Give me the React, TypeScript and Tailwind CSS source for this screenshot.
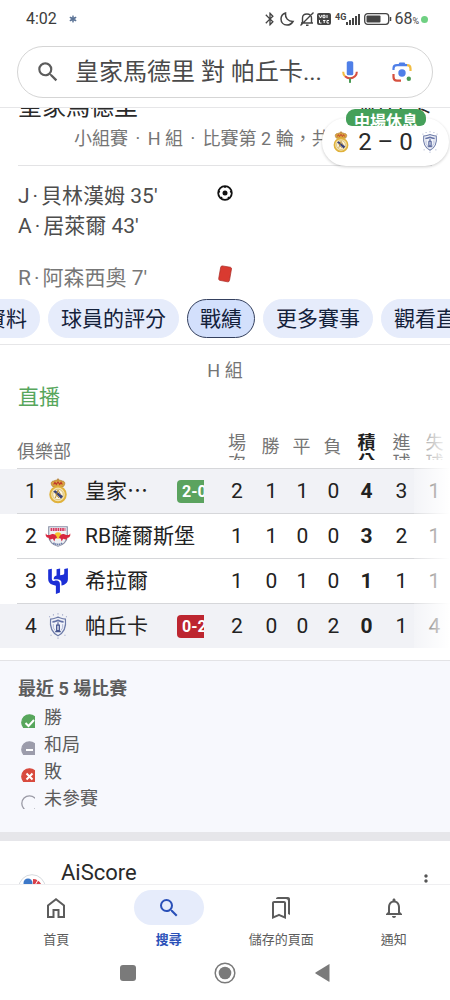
import React, { useState } from "react";
import {
  MdBluetooth,
  MdMoreVert,
  MdNotificationsNone,
  MdOutlineBookmarks,
  MdSearch,
} from "react-icons/md";

const RealMadridCrest = ({ className }: { className: string }) => (
  <svg viewBox="0 0 24 30" className={className} aria-hidden="true">
    <path
      d="M6 10C3 7 4 3.500 7 3.500C9 2.500 10 2.500 12 2C14 2.500 15 2.500 17 3.500C20 3.500 21 7 18 10Z"
      fill="#d9a441"
      stroke="#b27b2c"
      strokeWidth="0.8"
    />
    <path d="M7 7.500L8.500 5L10 7.500L12 4.500L14 7.500L15.500 5L17 7.500" fill="none" stroke="#c0392b" strokeWidth="1.200" />
    <path d="M12 .5V3M11 1.500H13" stroke="#b27b2c" strokeWidth="0.8" />
    <circle cx="12" cy="19" r="9" fill="#f3e3b0" stroke="#e0b23c" strokeWidth="2.200" />
    <circle cx="12" cy="19" r="6" fill="#fbf5e0" stroke="#c9a24a" strokeWidth="0.7" />
    <path d="M6.500 15.500L9 14L17.800 21L15.500 24Z" fill="#39427a" />
    <path d="M9 23L12 14L15 19M9 18L13 23" fill="none" stroke="#b58a2e" strokeWidth="1.100" />
  </svg>
);

const SalzburgCrest = ({ className }: { className: string }) => (
  <svg viewBox="0 0 28 24" className={className} aria-hidden="true">
    <path d="M4 2H24V12C24 18 19 22 14 23C9 22 4 18 4 12Z" fill="#eef0f4" stroke="#8a90a6" strokeWidth="1.200" />
    <path d="M6 5H22" stroke="#d8385e" strokeWidth="3" strokeDasharray="1.800 .7" />
    <circle cx="14" cy="11.500" r="3.500" fill="#f4c430" />
    <path d="M1 9C2 12 4 11 7 10C10 9 12 11 13 14L11 15L10 18L8.500 15L5 16L4 14C2 14 0 12 1 9Z" fill="#d8263f" />
    <path d="M27 9C26 12 24 11 21 10C18 9 16 11 15 14L17 15L18 18L19.500 15L23 16L24 14C26 14 28 12 27 9Z" fill="#d8263f" />
    <path d="M9 19.500C12 21.500 16 21.500 19 19.500" fill="none" stroke="#6d7da8" strokeWidth="1.800" strokeDasharray="1.500 .6" />
  </svg>
);

const HilalCrest = ({ className }: { className: string }) => (
  <svg viewBox="0 0 22 27" className={className} aria-hidden="true">
    <path
      d="M.8 1.500L4.600 .8V11C4.600 13 5.500 13.800 7 13.400C8.500 13 9.500 12.800 10.800 13.300C12.300 13.900 13 15 13 17V25.500L8.800 27V18.500L5.500 17.500C2.300 16.500 .8 14.500 .8 11.500Z"
      fill="#1c2fd6"
    />
    <path
      d="M9.500 1.200L13.200 .4V7.500C15.500 7.500 17.500 7.200 17.500 5.500V1L21.300 .3V11.500C21.300 15.300 18.800 17.500 14.600 18.300V15.500C14.600 12.500 12.500 11.300 6.500 11.800C6.500 9.500 7.500 8.400 9.500 7.900Z"
      fill="#1c2fd6"
    />
  </svg>
);

const PachucaCrest = ({ className }: { className: string }) => (
  <svg viewBox="0 0 22 28" className={className} aria-hidden="true">
    <path d="M3 6.500C6 6.500 8 5.500 11 4.500C14 5.500 16 6.500 19 6.500C20 15 18 21 11 24.500C4 21 2 15 3 6.500Z" fill="#f1f3fa" stroke="#6d7ba8" strokeWidth="1.300" />
    <path d="M5 9.500C8 9.500 9 8.500 11 8C13 8.500 14 9.500 17 9.500" fill="none" stroke="#6472a6" strokeWidth="2" />
    <path d="M11 10V13M9.500 13H12.500V19H9.500ZM8 20H14" fill="#c9cfe3" stroke="#46558f" strokeWidth="1.200" />
    <path d="M6 12V16L8 19M16 12V16L14 19" fill="none" stroke="#9aa5c8" strokeWidth=".8" />
    <path d="M1.500 4H2.500M5.500 2H6.500M10.500 1H11.500M15.500 2H16.500M19.500 4H20.500M3 24H4M18 24H19M10.500 27H11.500" stroke="#8d98bf" strokeWidth="1.200" />
  </svg>
);

const MicIcon = () => (
  <svg viewBox="0 0 24 24" className="h-[26px] w-[26px]" aria-hidden="true">
    <rect x="9" y="2" width="6" height="13" rx="1.500" fill="#4f7fe8" />
    <path d="M5.700 11.800C5.700 13.500 6.300 15 7.400 16" fill="none" stroke="#f2bd42" strokeWidth="1.900" />
    <path d="M7.400 16C10 18.500 14 18.500 16.600 16C17.700 15 18.300 13.500 18.300 11.800" fill="none" stroke="#d6503f" strokeWidth="1.900" />
    <path d="M12 18V22" stroke="#4a9a55" strokeWidth="1.900" />
  </svg>
);

const LensIcon = () => (
  <svg viewBox="0 0 24 24" className="h-6 w-6" aria-hidden="true">
    <path d="M3.500 10V8.500C3.500 6.300 4.800 5.200 7 5.200H17" fill="none" stroke="#4f7fe8" strokeWidth="2.200" />
    <path d="M8 5L9.500 2.500H14.500L16 5Z" fill="#4f7fe8" />
    <path d="M17 5.200C19.200 5.200 20.500 6.300 20.500 8.500V11" fill="none" stroke="#f2bd42" strokeWidth="2.200" />
    <path d="M3.500 14V17C3.500 19.400 4.800 20.600 7 20.600H11" fill="none" stroke="#d6503f" strokeWidth="2.200" />
    <circle cx="12" cy="13" r="3.700" fill="#4f7fe8" />
    <circle cx="18.800" cy="18.800" r="2.200" fill="#4a9a55" />
  </svg>
);

const HomeIcon = ({ className }: { className: string }) => (
  <svg viewBox="0 0 24 24" className={className} fill="none" stroke="currentColor" strokeWidth="2" aria-hidden="true">
    <path d="M4 21V9.500L12 3.300L20 9.500V21H14.500V14H9.500V21Z" />
  </svg>
);

const StatusIcons = () => (
  <div className="flex items-center text-[#444]">
    <MdBluetooth className="h-4 w-4" />
    <svg viewBox="0 0 16 16" className="ml-px h-4 w-4" fill="none" stroke="currentColor" strokeWidth="1.500">
      <path d="M6.500 2C6 7 9 10.500 14 10.500C12.500 13 10.500 14 8 14C4.500 14 2 11.500 2 8C2 5 4 2.800 6.500 2Z" />
    </svg>
    <svg viewBox="0 0 16 16" className="ml-1 h-4 w-4" fill="none" stroke="currentColor" strokeWidth="1.400">
      <path d="M2 12H14M3.500 12V7C3.500 4.500 5.500 3 8 3C10.500 3 12.500 4.500 12.500 7V12M7 14.300H9.500M14.500 1.500L1.500 14.500" />
    </svg>
    <svg viewBox="0 0 14 12" className="ml-0.5 h-3 w-3.5">
      <rect width="14" height="12" rx="2" fill="#444" />
      <path d="M2 2L3.500 5L5 2M6 2.300H8V4.700H6ZM10 2V5M2.500 7V10H4.500M6 7.500H8.500M7.200 7.500V10M12 7.500H10V10H12" fill="none" stroke="#fff" strokeWidth="1" />
    </svg>
    <div className="ml-1 flex items-end">
      <span className="self-start text-[9px] leading-[9px] font-bold">4G</span>
      <svg viewBox="0 0 14 12" className="h-3 w-3.5" fill="currentColor">
        <path d="M0 9H2V12H0ZM3 7H5V12H3ZM6 5H8V12H6ZM9 3H11V12H9ZM12 1H14V12H12Z" />
      </svg>
    </div>
    <svg viewBox="0 0 28 12" className="ml-1 h-3 w-7">
      <rect x=".7" y=".7" width="24" height="10.600" rx="3" fill="none" stroke="#444" strokeWidth="1.300" />
      <rect x="2.500" y="2.500" width="14" height="7" rx="1" fill="#444" />
      <path d="M26.500 4V8" stroke="#444" strokeWidth="1.500" />
    </svg>
    <span className="ml-0.5 text-[16px] leading-5">68</span>
    <span className="mt-1 text-[9px] leading-3">%</span>
    <span className="ml-0.5 h-[7px] w-[7px] rounded-full bg-[#6fd082]" />
  </div>
);

const Header = () => {
  const [query, setQuery] = useState("皇家馬德里 對 帕丘卡...");

  return (
    <header className="shrink-0 border-b border-[#e6e6e8] pb-[9px]">
      <div className="flex h-[38px] items-center justify-between pr-[22px] pl-[26px]">
        <div className="flex items-center gap-3 text-[#3c3c3c]">
          <span className="text-[16px] leading-5">4:02</span>
          <svg viewBox="0 0 10 10" className="h-2 w-2" stroke="#5b7396" strokeWidth="1.600">
            <path d="M5 .5V9.500M1 2.700L9 7.300M9 2.700L1 7.300" />
            <circle cx="5" cy="5" r="2.500" fill="none" strokeWidth="1" />
          </svg>
        </div>
        <StatusIcons />
      </div>
      <form
        role="search"
        onSubmit={(e) => e.preventDefault()}
        className="mx-[17px] mt-2 flex h-[52px] items-center rounded-full border border-[#d5d5d5] pr-[18px] pl-[17px]"
      >
        <MdSearch className="h-[26px] w-[26px] shrink-0 text-[#5c5c5c]" />
        <label htmlFor="q" className="sr-only">
          搜尋
        </label>
        <input
          id="q"
          type="text"
          value={query}
          onChange={(e) => setQuery(e.target.value)}
          className="ml-3.5 min-w-0 flex-1 text-[24px] leading-8 text-[#4a4a4a] outline-none"
        />
        <button type="button" aria-label="語音搜尋">
          <MicIcon />
        </button>
        <button type="button" aria-label="智慧鏡頭" className="ml-[27px]">
          <LensIcon />
        </button>
      </form>
    </header>
  );
};

const ScorePill = () => (
  <div className="absolute top-0 right-px">
    <div className="mt-2.5 flex h-12 w-[127px] items-center justify-between rounded-full bg-white px-2.5 shadow-[0_1px_3px_rgba(0,0,0,0.2)]">
      <RealMadridCrest className="h-[22px] w-[18px]" />
      <span className="text-[24px] leading-7 whitespace-pre text-[#2a2a2a]">2 – 0</span>
      <PachucaCrest className="h-[22px] w-[18px]" />
    </div>
    <div className="absolute top-px left-6 h-[17px] w-20 overflow-hidden rounded-t-[9px] rounded-b-[6px] bg-[#45a05a] text-center text-[16px] leading-[25px] font-bold text-white">
      中場休息
    </div>
  </div>
);

const MatchSummary = () => (
  <section className="relative">
    <div className="flex h-[11px] items-end justify-between overflow-hidden px-[18px] text-[24px] leading-6 text-[#2a2a2a]">
      <span>皇家馬德里</span>
      <span>帕丘卡</span>
    </div>
    <p className="mx-[18px] mt-2 overflow-hidden border-b border-[#e3e3e5] pb-3.5 pl-14 text-[18px] leading-6 whitespace-nowrap text-[#757575]">
      小組賽<span className="mx-[3px]"> · </span>H 組
      <span className="mx-[3px]"> · </span>比賽第 2 輪，共
    </p>
    <ScorePill />
    <div className="grid grid-cols-[1fr_auto_1fr] items-start px-[18px] pt-[15px] text-[21px] leading-[30px] text-[#4d4d4d]">
      <div>
        <p>
          J<span className="mx-[3px]">·</span>貝林漢姆 35'
        </p>
        <p>
          A<span className="mx-[3px]">·</span>居萊爾 43'
        </p>
      </div>
      <svg viewBox="0 0 16 16" className="mt-1 h-4 w-4" aria-label="入球">
        <circle cx="8" cy="8" r="6.800" fill="#fff" stroke="#111" strokeWidth="1.800" />
        <circle cx="8" cy="8" r="2.500" fill="#111" />
        <path d="M8 1V3M1.500 6.500L3 7M14.500 6.500L13 7M4 13.500L5 12M12 13.500L11 12" stroke="#111" strokeWidth="1.500" />
      </svg>
    </div>
    <div className="grid grid-cols-[1fr_auto_1fr] items-start px-[18px] pt-[22px] text-[21px] leading-[30px] text-[#777]">
      <p>
        R<span className="mx-[3px]">·</span>阿森西奧 7'
      </p>
      <svg viewBox="0 0 16 20" className="mt-0.5 h-[18px] w-4" aria-label="紅牌">
        <path d="M5 1L14 2.500Q15.500 3 15.200 4.500L13 17Q12.500 19 11 18.700L2 17Q.7 16.500 1 15L3.200 2.500Q3.500 1 5 1Z" fill="#d93a30" stroke="#a82a24" strokeWidth=".8" />
      </svg>
    </div>
  </section>
);

const tabs = ["資料", "球員的評分", "戰績", "更多賽事", "觀看直播"];

const Tabs = () => {
  const [active, setActive] = useState("戰績");

  return (
    <nav className="flex gap-2 overflow-hidden border-b border-[#e6e6e8] py-1.5">
      {tabs.map((tab) => (
        <button
          key={tab}
          type="button"
          onClick={() => setActive(tab)}
          className={`h-[39px] shrink-0 rounded-full border px-3 text-[21px] leading-7 text-[#14213a] first:-ml-7 ${
            tab === active
              ? "border-[#34405e] bg-[#d3e0fc]"
              : "border-[#e6ecfb] bg-[#e6ecfb]"
          }`}
        >
          {tab}
        </button>
      ))}
    </nav>
  );
};

interface Club {
  name: string;
  Crest: React.FC<{ className: string }>;
  score?: string;
  won?: boolean;
  stats: number[];
}

const clubs: Club[] = [
  { name: "皇家⋯", Crest: RealMadridCrest, score: "2-0", won: true, stats: [2, 1, 1, 0, 4, 3, 1] },
  { name: "RB薩爾斯堡", Crest: SalzburgCrest, stats: [1, 1, 0, 0, 3, 2, 1] },
  { name: "希拉爾", Crest: HilalCrest, stats: [1, 0, 1, 0, 1, 1, 1] },
  { name: "帕丘卡", Crest: PachucaCrest, score: "0-2", won: false, stats: [2, 0, 0, 2, 0, 1, 4] },
];

const columns = [
  { label: "場次", width: "w-[38px]" },
  { label: "勝", width: "w-[31px]" },
  { label: "平", width: "w-[31px]" },
  { label: "負", width: "w-[31px]" },
  { label: "積分", width: "w-[35px]" },
  { label: "進球", width: "w-[35px]" },
  { label: "失球", width: "w-[31px]" },
];

const Standings = () => (
  <section className="pt-3.5">
    <h2 className="text-center text-[18px] leading-6 text-[#757575]">H 組</h2>
    <p className="px-[18px] text-[21px] leading-7 text-[#57a65c]">直播</p>
    <div className="relative mt-5">
      <table className="w-full table-fixed border-separate border-spacing-0 text-[#222]">
        <thead>
          <tr className="text-[18px] text-[#757575]">
            <td className="w-[17px]" />
            <th colSpan={3} className="h-[38px] border-b border-[#d6d7da] pb-1 text-left align-bottom leading-6 font-normal">
              俱樂部
            </th>
            {columns.map((col) => (
              <th key={col.label} className={`border-b border-[#d6d7da] pb-2 align-bottom ${col.width}`}>
                <span
                  className={`mx-auto flex h-[27px] w-5 overflow-hidden leading-5 ${
                    col.label.length > 1 ? "items-start" : "items-center"
                  } ${col.label === "積分" ? "font-bold text-[#222]" : "font-normal"}`}
                >
                  {col.label}
                </span>
              </th>
            ))}
          </tr>
        </thead>
        <tbody>
          {clubs.map(({ name, Crest, score, won, stats }, i) => {
            const line = i < clubs.length - 1 ? "border-b border-[#d6d7da]" : "";
            return (
              <tr key={name} className={`${line ? "h-[45px]" : "h-11"} ${score ? "bg-[#f1f2f6]" : ""}`}>
                <td className="w-[17px]" />
                <td colSpan={3} className={line}>
                  <div className="flex items-center text-[21px] leading-7">
                    <span className="w-7 text-center">{i + 1}</span>
                    <Crest className="h-[26px] w-[26px] shrink-0" />
                    <span className="ml-3.5 whitespace-nowrap">{name}</span>
                    {score && (
                      <span
                        className={`mr-3.5 ml-auto h-[23px] w-[27px] overflow-hidden rounded-l-sm pl-[5px] text-[16px] leading-[23px] font-bold whitespace-nowrap text-white ${
                          won ? "bg-[#5ba35f]" : "bg-[#bd2630]"
                        }`}
                      >
                        {score}
                      </span>
                    )}
                  </div>
                </td>
                {stats.map((value, n) => (
                  <td
                    key={columns[n].label}
                    className={`text-center text-[21px] leading-7 ${line} ${n === 4 ? "font-bold" : ""}`}
                  >
                    {value}
                  </td>
                ))}
              </tr>
            );
          })}
        </tbody>
      </table>
      <div className="pointer-events-none absolute inset-y-0 right-0 w-9 bg-linear-to-r from-white/20 via-white/60 to-white" />
    </div>
  </section>
);

const legend = [
  { label: "勝", color: "#57a65c", mark: "M4.500 9L7.500 12L13 6" },
  { label: "和局", color: "#9c9cab", mark: "M5 9H12" },
  { label: "敗", color: "#d84a3e", mark: "M5.500 5.500L11.500 11.500M11.500 5.500L5.500 11.500" },
  { label: "未參賽", color: "none", mark: "" },
];

const Legend = () => (
  <section className="mt-3 border-t border-[#e3e3e6] bg-[#f7f8fd] px-[18px] pt-3.5 pb-5 text-[18px] leading-[27px] text-[#5c5c5c]">
    <h3 className="mb-0.5 font-bold">最近 5 場比賽</h3>
    <ul>
      {legend.map(({ label, color, mark }) => (
        <li key={label} className="flex items-center gap-[9px]">
          <svg viewBox="0 0 14 14" className="mt-1.5 ml-[3px] h-3.5 w-3.5 overflow-hidden" aria-hidden="true">
            <circle cx="8.500" cy="8.500" r="7.700" fill={color} stroke={color === "none" ? "#9a9aa5" : color} strokeWidth="1.300" />
            <path d={mark} fill="none" stroke="#fff" strokeWidth="2" />
          </svg>
          <span>{label}</span>
        </li>
      ))}
    </ul>
  </section>
);

const SearchResult = () => (
  <article className="flex items-start border-t-[9px] border-[#e6e6ea] pt-[18px] pr-[14px] pl-[18px]">
    <svg viewBox="0 0 28 28" className="mt-[15px] h-7 w-7" aria-hidden="true">
      <circle cx="14" cy="14" r="13.300" fill="#fff" stroke="#d6dade" />
      <circle cx="10" cy="9" r="4.500" fill="#3c78c8" />
      <path d="M15 5C20 5 24 9 24 14L15 14Z" fill="#d8414a" />
      <path d="M16 13L20 6M18 14L24 10" stroke="#fff" strokeWidth="1" />
      <path d="M5 14C5 19 9 23 14 23V14Z" fill="#3c78c8" />
    </svg>
    <a href="#aiscore" className="ml-[15px] flex-1 text-[22px] leading-7 text-[#2a2a2a]">
      AiScore
    </a>
    <button type="button" aria-label="更多選項" className="mt-3 text-[#555]">
      <MdMoreVert className="h-5 w-5" />
    </button>
  </article>
);

const navItems = [
  { label: "首頁", Icon: HomeIcon },
  { label: "搜尋", Icon: MdSearch },
  { label: "儲存的頁面", Icon: MdOutlineBookmarks },
  { label: "通知", Icon: MdNotificationsNone },
];

const BottomNav = () => {
  const [current, setCurrent] = useState("搜尋");

  return (
    <footer className="shrink-0 border-t border-[#efeff1] bg-white text-[#5c5c5c]">
      <nav className="grid grid-cols-4 pt-[5px]">
        {navItems.map(({ label, Icon }) => (
          <button
            key={label}
            type="button"
            onClick={() => setCurrent(label)}
            className={`flex flex-col items-center text-[13px] leading-[18px] ${
              label === current ? "font-bold text-[#2a50b8]" : ""
            }`}
          >
            <span
              className={`mb-1.5 flex h-[35px] w-[70px] items-center justify-center rounded-full ${
                label === current ? "bg-[#e6ecfb]" : ""
              }`}
            >
              <Icon className="h-6 w-6" />
            </span>
            {label}
          </button>
        ))}
      </nav>
      <div className="mx-auto grid h-[51px] w-[65%] grid-cols-3 items-center justify-items-center pb-1 text-[#7a7a7a]">
        <button type="button" aria-label="最近使用">
          <svg viewBox="0 0 22 22" className="h-[22px] w-[22px]">
            <rect x="3" y="3" width="16" height="16" rx="3" fill="currentColor" />
          </svg>
        </button>
        <button type="button" aria-label="主畫面">
          <svg viewBox="0 0 22 22" className="h-[22px] w-[22px]">
            <circle cx="11" cy="11" r="9.800" fill="none" stroke="currentColor" strokeWidth="1.500" />
            <circle cx="11" cy="11" r="6.300" fill="currentColor" />
          </svg>
        </button>
        <button type="button" aria-label="返回">
          <svg viewBox="0 0 22 22" className="h-[22px] w-[22px]">
            <path d="M17.500 2.500V19.500Q17.500 20 17 19.800L3.500 11.500Q3 11 3.500 10.500L17 2.200Q17.500 2 17.500 2.500Z" fill="currentColor" />
          </svg>
        </button>
      </div>
    </footer>
  );
};

const App = () => {
  return (
    <div
      lang="zh-Hant"
      className="flex h-screen flex-col overflow-hidden bg-white font-[Roboto,'Noto_Sans_CJK_TC',sans-serif]"
    >
      <Header />
      <main className="min-h-0 flex-1 overflow-hidden">
        <MatchSummary />
        <Tabs />
        <Standings />
        <Legend />
        <SearchResult />
      </main>
      <BottomNav />
    </div>
  );
};

export default App;
